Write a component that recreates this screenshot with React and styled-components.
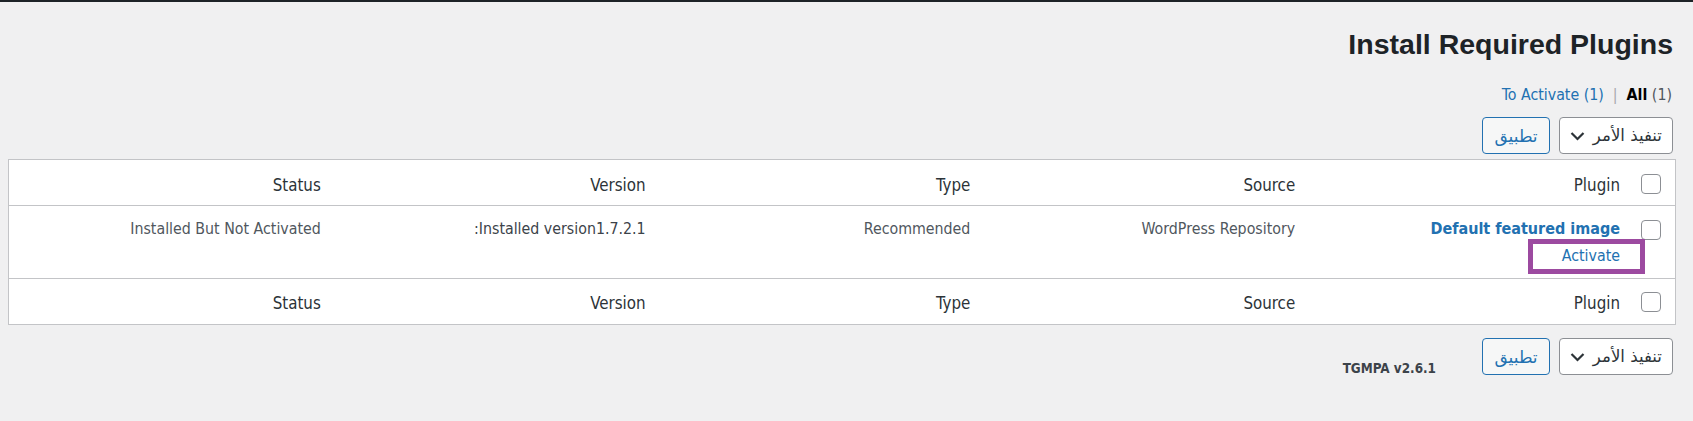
import React from "react"
import styled, { createGlobalStyle } from "styled-components"

const GlobalStyle = createGlobalStyle`
html, body {
  margin: 0;
  background: #f0f0f1;
}
body {
  font-family: "DejaVu Sans Condensed", "DejaVu Sans", sans-serif;
  font-stretch: condensed;
  color: #3c434a;
}
`

const AdminBar = styled.div`
height: 2px;
background: #1d2327;
`

const Wrap = styled.div`
direction: rtl;
padding: 0 17px 40px 8px;
`

const Title = styled.h1`
margin: 24px 3px 0 0;
font-family: "Liberation Sans", Arial, sans-serif;
font-stretch: normal;
font-weight: 700;
font-size: 28.5px;
line-height: 36px;
color: #1d2327;
`

const Views = styled.ul`
display: flex;
margin: 21px 4px 0 0;
padding: 0;
list-style: none;
font-size: 15.8px;
line-height: 24px;
color: #50575e;
`

const ViewItem = styled.li`
direction: ltr;
`

const ViewLink = styled.a`
color: ${(p) => (p.$current ? "#000" : "#2271b1")};
font-weight: ${(p) => (p.$current ? 700 : 400)};
text-decoration: none;
`

const Sep = styled.li`
color: #a7aaad;
padding: 0 9px;
`

const TableNav = styled.div`
display: flex;
gap: 9px;
margin: ${(p) => (p.$bottom ? "13px 3px 0 0" : "10px 3px 0 0")};
`

const BulkSelect = styled.div`
box-sizing: border-box;
width: 114px;
height: 37px;
display: flex;
align-items: center;
justify-content: space-between;
padding: 0 10px 0 10px;
background: #fff;
border: 1px solid #8c8f94;
border-radius: 4px;
font-family: "DejaVu Sans", sans-serif;
font-stretch: normal;
font-size: 16.6px;
color: #2c3338;
`

const ApplyButton = styled.button`
box-sizing: border-box;
width: 68px;
height: 37px;
padding: 0;
background: #f6f7f7;
border: 1px solid #2271b1;
border-radius: 4px;
font-family: "DejaVu Sans", sans-serif;
font-size: 17px;
color: #2271b1;
`

const Version = styled.div`
align-self: flex-end;
margin: 0 37px -2px 0;
direction: ltr;
font-size: 13.4px;
line-height: 16px;
font-weight: 700;
color: #3c434a;
`

const Table = styled.div`
margin-top: 5px;
background: #fff;
border: 1px solid #c3c4c7;
`

const Row = styled.div`
position: relative;
display: grid;
grid-template-columns: 42px repeat(5, 1fr);
height: ${(p) => (p.$body ? "72px" : "45px")};
border-bottom: ${(p) => (p.$last ? "none" : "1px solid #c3c4c7")};
`

const HeadCell = styled.div`
padding: ${(p) => (p.$foot ? "12px" : "13px")} 13px 0 0;
font-size: 16.8px;
line-height: 24px;
color: #2c3338;
`

const Cell = styled.div`
padding: 10.5px 13px 0 0;
font-size: 15.8px;
line-height: 24px;
color: ${(p) => (p.$dark ? "#3c434a" : "#50575e")};
`

const CheckCell = styled.div`
padding: ${(p) => (p.$top ? p.$top : "14px")} 14px 0 0;
`

const Checkbox = styled.span`
display: block;
box-sizing: border-box;
width: 20px;
height: 20px;
background: #fff;
border: 1px solid #8c8f94;
border-radius: 4px;
`

const PluginName = styled.a`
display: block;
color: #2271b1;
font-weight: 700;
font-size: 16px;
text-decoration: none;
`

const RowActions = styled.div`
padding-top: 3px;
`

const ActionLink = styled.a`
color: #2271b1;
text-decoration: none;
`

const VersionLine = styled.div`
display: flex;
flex-direction: row-reverse;
justify-content: flex-end;
`

const Highlight = styled.div`
position: absolute;
top: 33px;
right: 30px;
box-sizing: border-box;
width: 117px;
height: 35px;
border: 5px solid #9c4aa0;
pointer-events: none;
`

const Chevron = () => (
  <svg width="15" height="16" viewBox="0 0 15 16" fill="none">
    <polyline points="1.5,5 7.5,11 13.5,5" stroke="#2c3338" strokeWidth="2.2" />
  </svg>
)

const columns = ["Plugin", "Source", "Type", "Version", "Status"]

const HeaderRow = ({ foot }) => (
  <Row $last={foot}>
    <CheckCell $top={foot ? "13px" : "14px"}>
      <Checkbox />
    </CheckCell>
    {columns.map((c) => (
      <HeadCell key={c} $foot={foot}>{c}</HeadCell>
    ))}
  </Row>
)

const Actions = ({ bottom }) => (
  <TableNav $bottom={bottom}>
    <BulkSelect>
      <span>تنفيذ الأمر</span>
      <Chevron />
    </BulkSelect>
    <ApplyButton>تطبيق</ApplyButton>
    {bottom && <Version>TGMPA v2.6.1</Version>}
  </TableNav>
)

export default function App() {
  return (
    <>
      <GlobalStyle />
      <AdminBar />
      <Wrap>
        <Title>Install Required Plugins</Title>
        <Views>
          <ViewItem>
            <ViewLink $current>All</ViewLink> (1)
          </ViewItem>
          <Sep>|</Sep>
          <ViewItem>
            <ViewLink>To Activate (1)</ViewLink>
          </ViewItem>
        </Views>
        <Actions />
        <Table>
          <HeaderRow />
          <Row $body>
            <CheckCell>
              <Checkbox />
            </CheckCell>
            <Cell>
              <PluginName>Default featured image</PluginName>
              <RowActions>
                <ActionLink>Activate</ActionLink>
              </RowActions>
            </Cell>
            <Cell>WordPress Repository</Cell>
            <Cell>Recommended</Cell>
            <Cell $dark>
              <VersionLine>
                <span>Installed version:</span>
                <span>1.7.2.1</span>
              </VersionLine>
            </Cell>
            <Cell>Installed But Not Activated</Cell>
            <Highlight />
          </Row>
          <HeaderRow foot />
        </Table>
        <Actions bottom />
      </Wrap>
    </>
  )
}
